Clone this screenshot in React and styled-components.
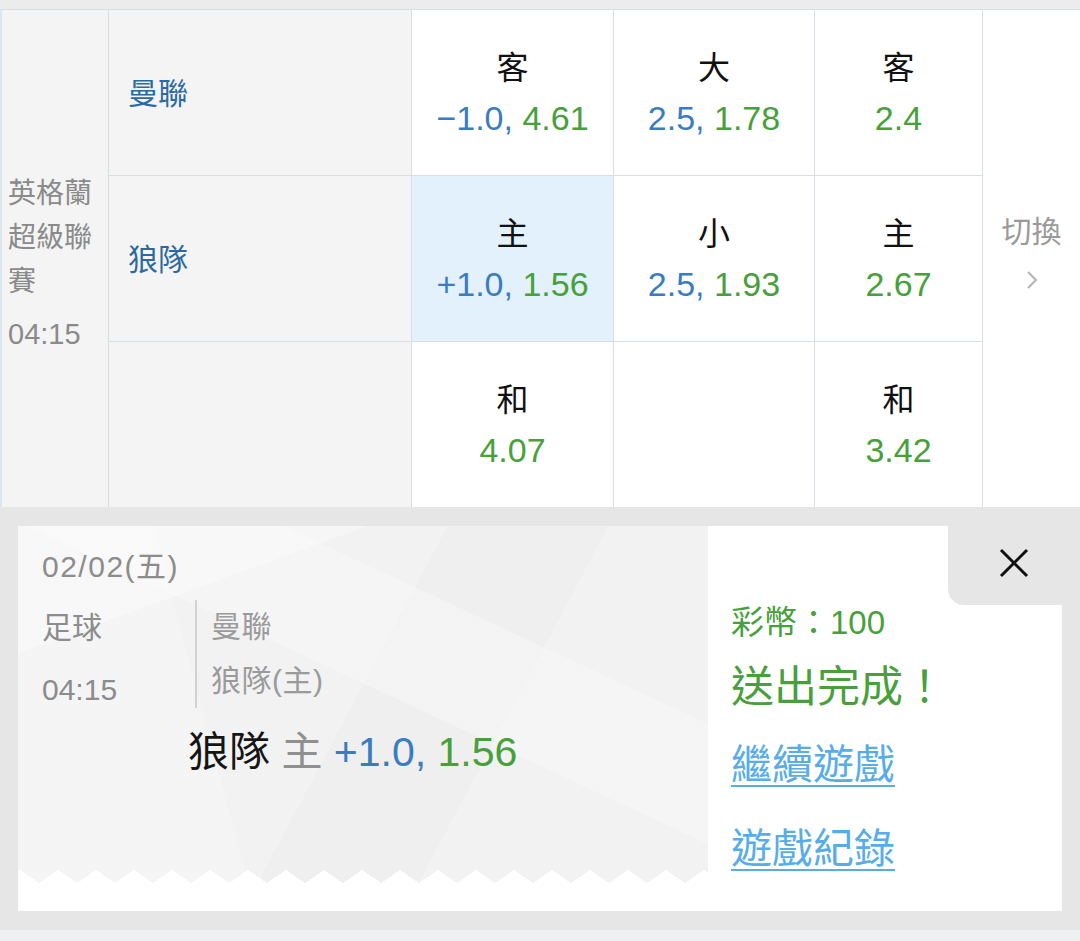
import React from "react";
import styled, { createGlobalStyle } from "styled-components";

const GlobalStyle = createGlobalStyle`
  html, body {
    margin: 0;
    padding: 0;
    background: #eef0f1;
    font-family: "Liberation Sans", "Noto Sans CJK TC", sans-serif;
  }
`;

const rows = [
  {
    team: "曼聯",
    cells: [
      { label: "客", line: "−1.0", odds: "4.61" },
      { label: "大", line: "2.5", odds: "1.78" },
      { label: "客", odds: "2.4" },
    ],
  },
  {
    team: "狼隊",
    cells: [
      { label: "主", line: "+1.0", odds: "1.56", active: true },
      { label: "小", line: "2.5", odds: "1.93" },
      { label: "主", odds: "2.67" },
    ],
  },
  {
    team: "",
    cells: [{ label: "和", odds: "4.07" }, null, { label: "和", odds: "3.42" }],
  },
];

const App = () => {
  return (
    <Page>
      <GlobalStyle />
      <TopBand />
      <Board>
        <League>
          <LeagueName>英格蘭超級聯賽</LeagueName>
          <LeagueTime>04:15</LeagueTime>
        </League>
        {rows.map((row, i) => (
          <React.Fragment key={i}>
            <Team>{row.team}</Team>
            {row.cells.map((cell, j) => (
              <Odd key={j} $active={cell && cell.active}>
                {cell && (
                  <>
                    <OddLabel>{cell.label}</OddLabel>
                    <OddValue>
                      {cell.line && <Line>{cell.line}, </Line>}
                      <Price>{cell.odds}</Price>
                    </OddValue>
                  </>
                )}
              </Odd>
            ))}
          </React.Fragment>
        ))}
        <Switch>
          <SwitchText>切換</SwitchText>
          <svg width="12" height="20" viewBox="0 0 12 20">
            <polyline
              points="2,2 10,10 2,18"
              fill="none"
              stroke="#b3b3b3"
              strokeWidth="2"
            />
          </svg>
        </Switch>
      </Board>

      <Bottom>
        <Card>
          <Ticket>
            <TicketBody>
              <DateText>02/02(五)</DateText>
              <InfoRow>
                <InfoLeft>
                  <div>足球</div>
                  <div>04:15</div>
                </InfoLeft>
                <InfoRight>
                  <div>曼聯</div>
                  <div>狼隊(主)</div>
                </InfoRight>
              </InfoRow>
              <Pick>
                <PickTeam>狼隊</PickTeam> <PickSide>主</PickSide>{" "}
                <Line>+1.0, </Line>
                <Price>1.56</Price>
              </Pick>
            </TicketBody>
            <Teeth />
          </Ticket>
          <Result>
            <ResultHead>
              <CloseTab>
                <svg width="30" height="30" viewBox="0 0 30 30">
                  <path
                    d="M2 2 L28 28 M28 2 L2 28"
                    stroke="#111"
                    strokeWidth="3"
                    fill="none"
                  />
                </svg>
              </CloseTab>
            </ResultHead>
            <ResultBody>
              <Coins>彩幣：100</Coins>
              <Done>送出完成！</Done>
              <ActionLink href="#" $first>繼續遊戲</ActionLink>
              <ActionLink href="#">遊戲紀錄</ActionLink>
            </ResultBody>
          </Result>
        </Card>
      </Bottom>
      <Footer />
    </Page>
  );
};

const Page = styled.div`
  width: 1080px;
  background: #e6e6e6;
`;

const TopBand = styled.div`
  height: 9px;
  background: #ececec;
`;

const Board = styled.div`
  display: grid;
  grid-template-columns: 106px 302px 201px 200px 167px 97px;
  grid-template-rows: repeat(3, 165px);
  gap: 1px;
  background: #d6dee6;
  border-top: 1px solid #d6dee6;
  border-left: 2px solid #dbe6ee;
`;

const League = styled.div`
  grid-column: 1;
  grid-row: 1 / span 3;
  background: #f4f4f4;
  display: flex;
  flex-direction: column;
  justify-content: center;
  padding: 10px 8px 0 6px;
  color: #8a8a8a;
  font-size: 28px;
`;

const LeagueName = styled.div`
  line-height: 44px;
`;

const LeagueTime = styled.div`
  margin-top: 8px;
  line-height: 44px;
  font-size: 29px;
`;

const Team = styled.div`
  background: #f4f4f4;
  display: flex;
  align-items: center;
  padding-left: 19px;
  padding-bottom: 4px;
  color: #2b6aa1;
  font-size: 30px;
`;

const Odd = styled.div`
  background: ${(p) => (p.$active ? "#e2f1fc" : "#fff")};
  display: flex;
  flex-direction: column;
  align-items: center;
  justify-content: center;
`;

const OddLabel = styled.div`
  font-size: 32px;
  line-height: 50px;
  color: #111;
`;

const OddValue = styled.div`
  font-size: 34px;
  line-height: 50px;
  white-space: nowrap;
`;

const Line = styled.span`
  color: #3a7cc0;
`;

const Price = styled.span`
  color: #47a03a;
`;

const Switch = styled.div`
  grid-column: 6;
  grid-row: 1 / span 3;
  background: #fff;
  display: flex;
  flex-direction: column;
  align-items: center;
  justify-content: center;
  gap: 20px;
  padding-bottom: 14px;
`;

const SwitchText = styled.div`
  font-size: 30px;
  color: #9a9a9a;
  line-height: 36px;
`;

const Bottom = styled.div`
  padding: 19px 18px 19px 18px;
`;

const Card = styled.div`
  display: flex;
  height: 385px;
  background: #fff;
`;

const Ticket = styled.div`
  width: 690px;
  display: flex;
  flex-direction: column;
  background-color: #f2f2f2;
  background-image: linear-gradient(
      160deg,
      rgba(255, 255, 255, 0.3) 0 20%,
      transparent 20%
    ),
    linear-gradient(
      25deg,
      transparent 0 55%,
      rgba(255, 255, 255, 0.25) 55% 72%,
      transparent 72%
    ),
    linear-gradient(
      118deg,
      transparent 0 48%,
      rgba(0, 0, 0, 0.012) 48% 66%,
      transparent 66%
    ),
    linear-gradient(
      75deg,
      rgba(255, 255, 255, 0.2) 0 30%,
      transparent 30%
    );
`;

const TicketBody = styled.div`
  flex: 1;
  padding: 21px 0 0 24px;
  color: #8c8c8c;
  font-size: 30px;
`;

const DateText = styled.div`
  line-height: 40px;
  letter-spacing: 1.5px;
`;

const InfoRow = styled.div`
  display: flex;
  align-items: flex-start;
  margin-top: 10px;
`;

const InfoLeft = styled.div`
  width: 153px;
  line-height: 62px;
`;

const InfoRight = styled.div`
  margin-top: 3px;
  padding-left: 14px;
  border-left: 2px solid #d2d2d2;
  line-height: 54px;
  color: #9a9a9a;
  letter-spacing: 0.5px;
`;

const Pick = styled.div`
  padding-left: 146px;
  margin-top: 3px;
  font-size: 41px;
  line-height: 56px;
  white-space: nowrap;
`;

const PickTeam = styled.span`
  color: #151515;
`;

const PickSide = styled.span`
  color: #8f8f8f;
`;

const Teeth = styled.div`
  height: 41px;
  background: conic-gradient(
        from 124.4deg at 50% 0,
        #fff 111.2deg,
        transparent 0
      ) -17px 0 / 38px 13px repeat-x,
    linear-gradient(#fff, #fff) 0 13px / 100% 28px no-repeat;
`;

const Result = styled.div`
  flex: 1;
  display: flex;
  flex-direction: column;
`;

const ResultHead = styled.div`
  display: flex;
  justify-content: flex-end;
`;

const CloseTab = styled.div`
  width: 114px;
  height: 79px;
  background: #e6e6e6;
  border-bottom-left-radius: 16px;
  display: flex;
  align-items: center;
  justify-content: center;
  padding: 0 0 6px 18px;
  box-sizing: border-box;
`;

const ResultBody = styled.div`
  display: flex;
  flex-direction: column;
  align-items: flex-start;
  padding-left: 23px;
  color: #47a03a;
`;

const Coins = styled.div`
  font-size: 33px;
  line-height: 36px;
`;

const Done = styled.div`
  margin-top: 18px;
  font-size: 43px;
  line-height: 56px;
`;

const ActionLink = styled.a`
  margin-top: ${(p) => (p.$first ? "22px" : "28px")};
  font-size: 41px;
  line-height: 56px;
  color: #58ade8;
  text-decoration: underline;
  text-decoration-thickness: 2px;
  text-underline-offset: 6px;
`;

const Footer = styled.div`
  height: 11px;
  background: #eef0f1;
  border-bottom: 1px solid #d9e6ee;
`;

export default App;
